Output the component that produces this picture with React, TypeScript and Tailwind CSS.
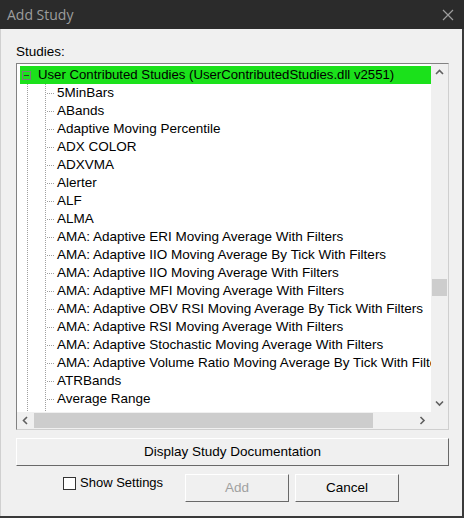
import React from 'react';

const studies = [
  '5MinBars',
  'ABands',
  'Adaptive Moving Percentile',
  'ADX COLOR',
  'ADXVMA',
  'Alerter',
  'ALF',
  'ALMA',
  'AMA: Adaptive ERI Moving Average With Filters',
  'AMA: Adaptive IIO Moving Average By Tick With Filters',
  'AMA: Adaptive IIO Moving Average With Filters',
  'AMA: Adaptive MFI Moving Average With Filters',
  'AMA: Adaptive OBV RSI Moving Average By Tick With Filters',
  'AMA: Adaptive RSI Moving Average With Filters',
  'AMA: Adaptive Stochastic Moving Average With Filters',
  'AMA: Adaptive Volume Ratio Moving Average By Tick With Filters',
  'ATRBands',
  'Average Range',
  'Bressert TRIX Indicator',
];

const font = { fontFamily: '"Liberation Sans", Arial, sans-serif' };

// dotted connectors drawn for each child row of the tree
const Connector: React.FC = () => (
  <svg width="40" height="18" className="shrink-0" shapeRendering="crispEdges">
    <line x1="10.5" y1="0" x2="10.5" y2="18" stroke="#a0a0a0" strokeDasharray="1 1" />
    <line x1="28.5" y1="0" x2="28.5" y2="18" stroke="#a0a0a0" strokeDasharray="1 1" />
    <line x1="30" y1="9.5" x2="38" y2="9.5" stroke="#a0a0a0" strokeDasharray="1 1" />
  </svg>
);

const Chevron: React.FC<{ dir: 'up' | 'down' | 'left' | 'right' }> = ({ dir }) => {
  const d = {
    up: 'M1 6 L4.5 2.5 L8 6',
    down: 'M1 2.5 L4.5 6 L8 2.5',
    left: 'M6 1 L2.5 4.5 L6 8',
    right: 'M2.5 1 L6 4.5 L2.5 8',
  }[dir];
  return (
    <svg width="9" height="9" viewBox="0 0 9 9">
      <path d={d} fill="none" stroke="#606060" strokeWidth="1.6" />
    </svg>
  );
};

const Button: React.FC<{ children: React.ReactNode; disabled?: boolean; className?: string }> = ({
  children,
  disabled,
  className,
}) => (
  <div
    className={`flex items-center justify-center h-[28px] bg-[#f0f0f0] border border-t-white border-l-white border-r-[#696969] border-b-[#696969] ${
      disabled ? 'text-[#a0a0a0]' : 'text-black'
    } ${className ?? ''}`}
  >
    {children}
  </div>
);

export default function App() {
  return (
    <div className="w-[464px] h-[518px] bg-[#3a3a3a] flex flex-col overflow-hidden" style={font}>
      <div className="h-[29px] bg-[#2b2b2b] flex items-center justify-between pl-[7px] pr-[10px]">
        <span className="text-[14px] text-[#9d9d9d]" style={{ fontFamily: '"Open Sans", sans-serif' }}>
          Add Study
        </span>
        <svg width="12" height="12" viewBox="0 0 12 12">
          <path d="M1 1 L11 11 M11 1 L1 11" stroke="#9d9d9d" strokeWidth="1.2" />
        </svg>
      </div>

      <div className="w-[462px] h-[487px] bg-[#f0f0f0] border-l border-[#d0d0d0] flex flex-col pl-[15px]">
        <div className="text-[13.5px] text-black leading-[15px] mt-[15px] h-[19px]">Studies:</div>

        <div className="w-[433px] h-[367px] border border-t-[#828282] border-l-[#828282] border-r-[#cfcfcf] border-b-[#cfcfcf] grid grid-cols-[414px_17px] grid-rows-[348px_17px] bg-white">
          <div className="overflow-hidden pt-[2px] pl-[3px] text-[13.5px] text-black">
            <div className="h-[18px] w-[411px] bg-[#1be11b] flex items-center whitespace-nowrap">
              <div className="w-[9px] h-[9px] ml-[2px] border border-[#7a7a7a] flex items-center justify-center">
                <div className="w-[5px] h-px bg-[#333]" />
              </div>
              <span className="ml-[7px] text-[13.2px]">User Contributed Studies (UserContributedStudies.dll v2551)</span>
            </div>
            {studies.map((s) => (
              <div key={s} className="h-[18px] flex items-center whitespace-nowrap -ml-[3px]">
                <Connector />
                <span>{s}</span>
              </div>
            ))}
          </div>

          <div className="bg-[#f0f0f0] flex flex-col items-center">
            <div className="h-[17px] flex items-center justify-center">
              <Chevron dir="up" />
            </div>
            <div className="flex-1 w-full flex flex-col px-px pt-[198px]">
              <div className="h-[17px] bg-[#cdcdcd]" />
            </div>
            <div className="h-[17px] flex items-center justify-center">
              <Chevron dir="down" />
            </div>
          </div>

          <div className="bg-[#f0f0f0] flex items-center">
            <div className="w-[17px] flex justify-center">
              <Chevron dir="left" />
            </div>
            <div className="flex-1 h-full py-px">
              <div className="w-[339px] h-full bg-[#cdcdcd]" />
            </div>
            <div className="w-[17px] flex justify-center">
              <Chevron dir="right" />
            </div>
          </div>
          <div className="bg-[#f0f0f0]" />
        </div>

        <Button className="w-[433px] mt-[8px] text-[13.5px]">Display Study Documentation</Button>

        <div className="flex items-start mt-[8px] h-[28px]">
          <div className="flex items-center ml-[47px] mt-[2px] h-[14px] w-[122px]">
            <div className="w-[13px] h-[13px] border border-[#333] bg-white" />
            <span className="ml-[4px] text-[13px] text-black">Show Settings</span>
          </div>
          <Button disabled className="w-[104px] text-[13.5px]">
            Add
          </Button>
          <Button className="w-[104px] ml-[6px] text-[13.5px]">Cancel</Button>
        </div>
      </div>
    </div>
  );
}
